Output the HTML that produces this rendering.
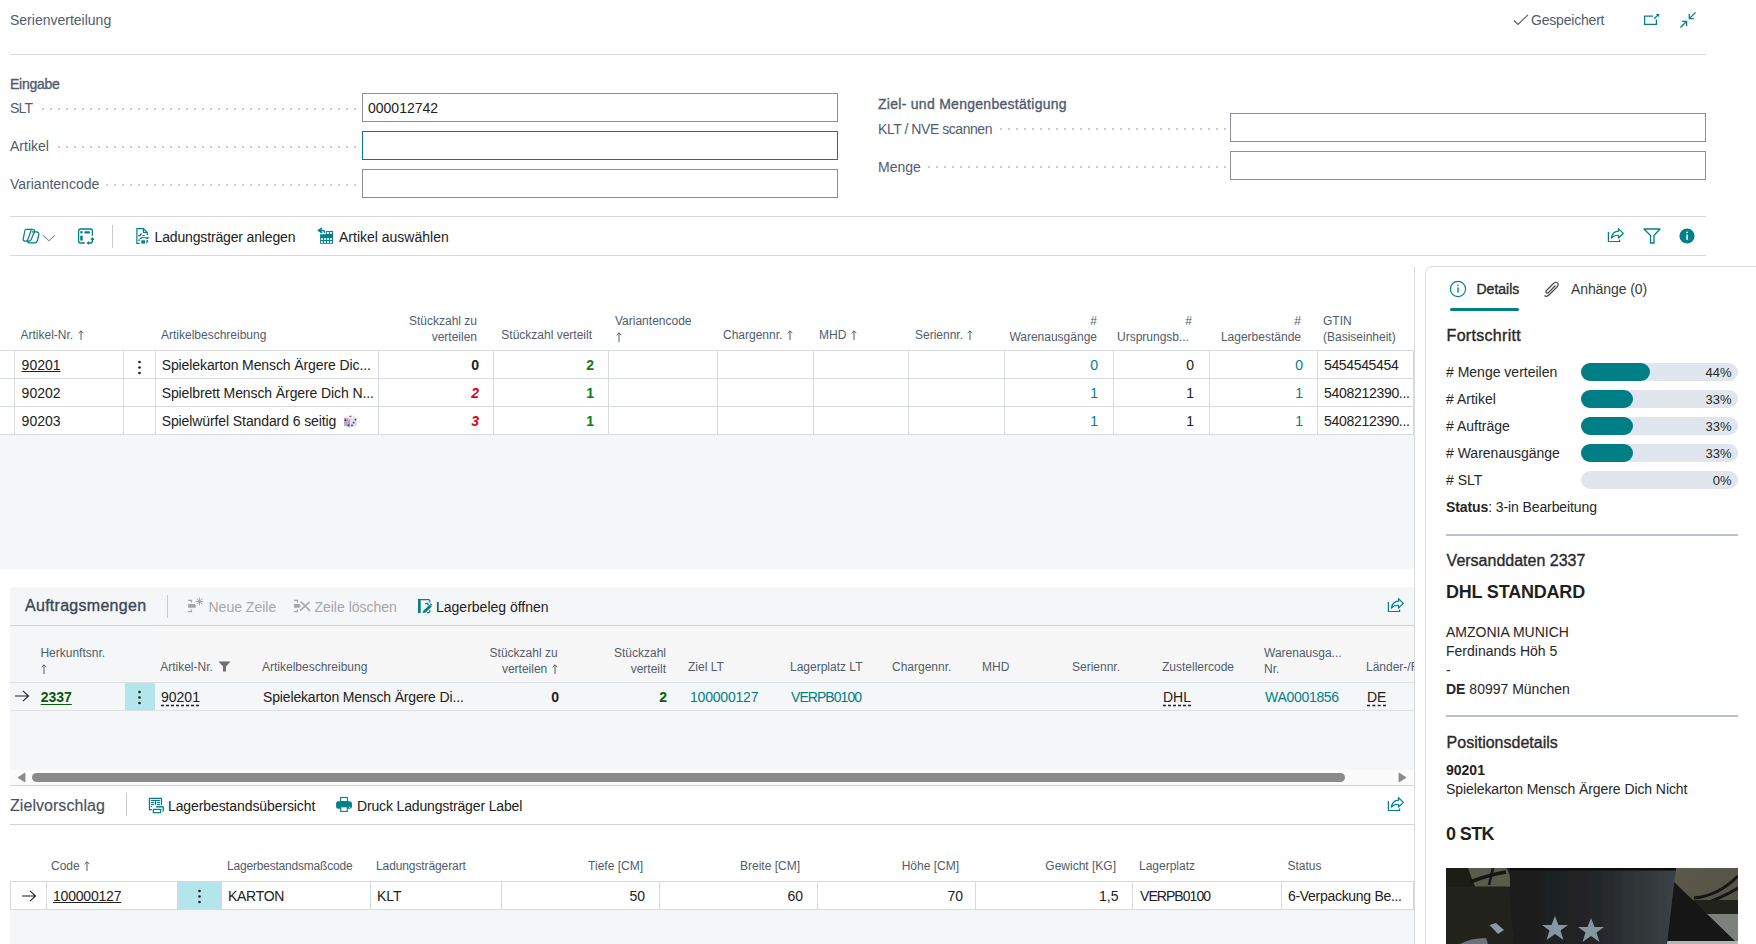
<!DOCTYPE html>
<html><head><meta charset="utf-8"><title>Serienverteilung</title>
<style>
html,body{margin:0;padding:0;background:#fff;}
body{width:1756px;height:944px;position:relative;overflow:hidden;font-family:"Liberation Sans",sans-serif;}
.t{position:absolute;white-space:nowrap;}
.r{position:absolute;}
</style></head><body>
<div class="t" style="left:10px;top:13.15px;font-size:14px;line-height:14px;font-weight:400;color:#505c6d;">Serienverteilung</div>
<svg class="r" style="left:1513px;top:14px;" width="16" height="12" viewBox="0 0 16 12"><path d="M1 6.5 L5 10.5 L15 0.8" fill="none" stroke="#505c6d" stroke-width="1.1"/></svg>
<div class="t" style="left:1531px;top:13.15px;font-size:14px;line-height:14px;font-weight:400;color:#505c6d;letter-spacing:-0.2px">Gespeichert</div>
<svg class="r" style="left:1640px;top:8px" width="60" height="24" viewBox="1640 8 60 24"><g fill="none" stroke="#008088" stroke-width="1.3">
<path d="M1653 16.2 H1644.6 V24.3 H1656.4 V19.6"/><path d="M1654.2 18.7 L1658.3 14.6"/>
<path d="M1695.6 12.4 L1689.8 18.1"/><path d="M1689.3 14 V18.6 H1693.9"/>
<path d="M1680.4 27.5 L1686.2 21.8"/><path d="M1682 21.4 H1686.6 V26"/></g>
<path d="M1655.8 13.9 H1659.2 V17.3Z" fill="#008088"/></svg>
<div class="r" style="left:10px;top:54px;width:1696px;height:1px;background:#d6d9de;"></div>
<div class="t" style="left:10px;top:77.15px;font-size:14px;line-height:14px;font-weight:400;color:#505c6d;-webkit-text-stroke:0.35px currentColor;letter-spacing:-0.25px">Eingabe</div>
<div class="r" style="left:34px;top:108px;width:324px;height:2px;background-image:radial-gradient(circle at 1px 1px,#c9cdd3 0.9px,transparent 1.1px);background-size:8px 2px;"></div>
<div class="t" style="left:10px;top:101.15px;font-size:14px;line-height:14px;font-weight:400;color:#505c6d;letter-spacing:-0.8px;background:#fff;padding-right:5px">SLT</div>
<div class="r" style="left:362px;top:93px;width:476px;height:29px;box-sizing:border-box;border:1px solid #8a919e;background:#fff;"></div>
<div class="t" style="left:368px;top:100.85px;font-size:14px;line-height:14px;font-weight:400;color:#212121;">000012742</div>
<div class="r" style="left:10px;top:146px;width:348px;height:2px;background-image:radial-gradient(circle at 1px 1px,#c9cdd3 0.9px,transparent 1.1px);background-size:8px 2px;"></div>
<div class="t" style="left:10px;top:139.15px;font-size:14px;line-height:14px;font-weight:400;color:#505c6d;background:#fff;padding-right:5px">Artikel</div>
<div class="r" style="left:362px;top:131px;width:476px;height:29px;box-sizing:border-box;border:1px solid #008088;background:#fff;"></div>
<div class="r" style="left:10px;top:184px;width:348px;height:2px;background-image:radial-gradient(circle at 1px 1px,#c9cdd3 0.9px,transparent 1.1px);background-size:8px 2px;"></div>
<div class="t" style="left:10px;top:176.85px;font-size:14px;line-height:14px;font-weight:400;color:#505c6d;background:#fff;padding-right:5px">Variantencode</div>
<div class="r" style="left:362px;top:169px;width:476px;height:29px;box-sizing:border-box;border:1px solid #8a919e;background:#fff;"></div>
<div class="t" style="left:878px;top:97.15px;font-size:14px;line-height:14px;font-weight:400;color:#505c6d;-webkit-text-stroke:0.35px currentColor;letter-spacing:0.28px">Ziel- und Mengenbestätigung</div>
<div class="r" style="left:880px;top:128px;width:346px;height:2px;background-image:radial-gradient(circle at 1px 1px,#c9cdd3 0.9px,transparent 1.1px);background-size:8px 2px;"></div>
<div class="t" style="left:878px;top:121.75px;font-size:14px;line-height:14px;font-weight:400;color:#505c6d;letter-spacing:-0.45px;background:#fff;padding-right:5px">KLT / NVE scannen</div>
<div class="r" style="left:1230px;top:113px;width:476px;height:29px;box-sizing:border-box;border:1px solid #8a919e;background:#fff;"></div>
<div class="r" style="left:880px;top:166px;width:346px;height:2px;background-image:radial-gradient(circle at 1px 1px,#c9cdd3 0.9px,transparent 1.1px);background-size:8px 2px;"></div>
<div class="t" style="left:878px;top:159.75px;font-size:14px;line-height:14px;font-weight:400;color:#505c6d;background:#fff;padding-right:5px">Menge</div>
<div class="r" style="left:1230px;top:151px;width:476px;height:29px;box-sizing:border-box;border:1px solid #8a919e;background:#fff;"></div>
<div class="r" style="left:10px;top:216px;width:1696px;height:1px;background:#d6d9de;"></div>
<svg class="r" style="left:18px;top:222px" width="42" height="28" viewBox="18 222 42 28"><g fill="none" stroke="#008088" stroke-width="1.25" stroke-linejoin="round">
<path d="M25.8 229.3 H32.2 Q35 229.3 34.6 231.6 L31.2 239.4 Q30.5 241 28.8 241 H25 Q22.6 241 23.3 238.6 L24.6 232 Q25 229.3 25.8 229.3Z"/>
<path d="M32 231.8 H36.2 Q39.2 232 38.8 235 L37.4 240.4 Q36.8 242.8 34.5 242.8 H29.6 Q27.2 242.8 27.6 240.6"/>
<path d="M31.2 230.2 L27 241.6"/></g>
<path d="M43 235.3 L48.9 240.8 L54.8 235.3" fill="none" stroke="#8a8a8a" stroke-width="1.1"/></svg>
<svg class="r" style="left:74px;top:224px" width="24" height="24" viewBox="74 224 24 24"><g fill="none" stroke="#008088" stroke-width="1.3">
<path d="M84.8 243 H80.6 Q78.6 243 78.6 241 V231 Q78.6 229 80.6 229 H90.4 Q92.4 229 92.4 231 V235.8"/>
<path d="M92.4 238.3 V241 Q92.4 243 90.4 243 H87.6"/></g>
<path d="M91 239.8 L92.4 238 L93.8 239.8 M89 241.6 L87.4 243 L89 244.4" fill="none" stroke="#008088" stroke-width="1.2"/>
<rect x="80.2" y="231.1" width="2.5" height="2.5" rx="1" fill="#008088"/>
<rect x="84.3" y="231.3" width="5.7" height="2.1" rx="1" fill="#008088"/>
<rect x="80.2" y="235.4" width="2.5" height="5.3" rx="1" fill="#008088"/></svg>
<div class="r" style="left:112px;top:225px;width:1px;height:23px;background:#c8ccd2;"></div>
<svg class="r" style="left:130px;top:224px" width="30" height="24" viewBox="130 224 30 24"><g fill="none" stroke="#008088" stroke-width="1.2">
<path d="M139.7 243.4 H136.9 V228.7 H143.5 L147.3 232.5 V235.3"/><path d="M143.4 228.9 V232.4 H147.2"/>
<path d="M138.3 235.9 L140 235.3 L141.5 233.5" stroke-width="1.4"/><path d="M142.4 235.6 H144.6"/></g>
<path d="M139.2 238.9 L140.8 237.3 H149.6 L148 238.9 H146.4 L146.1 238.2 H141.7 L141.4 238.9Z" fill="#008088"/>
<rect x="141.3" y="240.3" width="3.8" height="3.3" fill="#008088"/>
<path d="M146.3 240.3 H148.1 V241.5 L146.8 243.6 H146.3Z" fill="#008088"/>
<rect x="138.2" y="239.5" width="1.8" height="1.3" fill="#008088"/></svg>
<div class="t" style="left:154.5px;top:230.15px;font-size:14px;line-height:14px;font-weight:400;color:#212121;letter-spacing:-0.15px">Ladungsträger anlegen</div>
<svg class="r" style="left:312px;top:224px" width="30" height="24" viewBox="312 224 30 24"><path d="M320.1 234.2 H326.1 V231 H333 V243.8 H320.1Z" fill="#008088"/><rect x="320.95" y="238.05" width="1.9" height="1.9" fill="#fff"/><rect x="320.95" y="241.05" width="1.9" height="1.9" fill="#fff"/><rect x="324.05" y="238.05" width="1.9" height="1.9" fill="#fff"/><rect x="324.05" y="241.05" width="1.9" height="1.9" fill="#fff"/><rect x="326.95" y="238.05" width="1.9" height="1.9" fill="#fff"/><rect x="326.95" y="241.05" width="1.9" height="1.9" fill="#fff"/><rect x="329.95" y="238.05" width="1.9" height="1.9" fill="#fff"/><rect x="329.95" y="241.05" width="1.9" height="1.9" fill="#fff"/><rect x="326.95" y="231.95" width="1.9" height="1.9" fill="#fff"/><rect x="329.95" y="231.95" width="1.9" height="1.9" fill="#fff"/>
<path d="M324.5 232.6 V231.6 Q324.5 230.4 323 230.4 H318.6 M321.6 228.4 L318.4 230.4 L321.6 232.5" fill="none" stroke="#008088" stroke-width="1.5" stroke-linejoin="round" stroke-linecap="round"/></svg>
<div class="t" style="left:339px;top:230.15px;font-size:14px;line-height:14px;font-weight:400;color:#212121;">Artikel auswählen</div>
<svg class="r" style="left:1607px;top:227px;" width="18" height="16" viewBox="0 0 18 16"><g fill="none" stroke="#008088" stroke-width="1.2" stroke-linejoin="round"><path d="M1.4 5.1 V14.5 H12.6 V12.5"/><path d="M4.4 11 Q5.5 4.5 11.5 4.2 V1.6 L16.3 6.4 L11.5 11 V8.3 Q7 8 4.4 11Z"/></g></svg>
<svg class="r" style="left:1643px;top:228px;" width="18" height="16" viewBox="0 0 18 16"><path d="M1 1 H17 L11 7.5 V15 H7.5 V7.5 Z" fill="none" stroke="#008088" stroke-width="1.3" stroke-linejoin="round"/></svg>
<svg class="r" style="left:1679px;top:228px;" width="16" height="16" viewBox="0 0 16 16"><circle cx="8" cy="8" r="7.6" fill="#008088"/><rect x="7.3" y="6.5" width="1.5" height="5.3" fill="#fff"/><circle cx="8.05" cy="4.3" r="0.9" fill="#fff"/></svg>
<div class="r" style="left:10px;top:255px;width:1696px;height:1px;background:#d6d9de;"></div>
<div class="r" style="left:0px;top:435px;width:1414px;height:134px;background:#f5f6f8;"></div>
<div class="r" style="left:0px;top:350px;width:1414px;height:1px;background:#d6d9de;"></div>
<div class="r" style="left:0px;top:378px;width:1414px;height:1px;background:#d6d9de;"></div>
<div class="r" style="left:0px;top:406px;width:1414px;height:1px;background:#d6d9de;"></div>
<div class="r" style="left:0px;top:434px;width:1414px;height:1px;background:#d6d9de;"></div>
<div class="r" style="left:14px;top:350px;width:1px;height:84px;background:#d6d9de;"></div>
<div class="r" style="left:123px;top:350px;width:1px;height:84px;background:#d6d9de;"></div>
<div class="r" style="left:155px;top:350px;width:1px;height:84px;background:#d6d9de;"></div>
<div class="r" style="left:378px;top:350px;width:1px;height:84px;background:#d6d9de;"></div>
<div class="r" style="left:493px;top:350px;width:1px;height:84px;background:#d6d9de;"></div>
<div class="r" style="left:608px;top:350px;width:1px;height:84px;background:#d6d9de;"></div>
<div class="r" style="left:717px;top:350px;width:1px;height:84px;background:#d6d9de;"></div>
<div class="r" style="left:813px;top:350px;width:1px;height:84px;background:#d6d9de;"></div>
<div class="r" style="left:908px;top:350px;width:1px;height:84px;background:#d6d9de;"></div>
<div class="r" style="left:1004px;top:350px;width:1px;height:84px;background:#d6d9de;"></div>
<div class="r" style="left:1113px;top:350px;width:1px;height:84px;background:#d6d9de;"></div>
<div class="r" style="left:1209px;top:350px;width:1px;height:84px;background:#d6d9de;"></div>
<div class="r" style="left:1317px;top:350px;width:1px;height:84px;background:#d6d9de;"></div>
<div class="r" style="left:1413px;top:350px;width:1px;height:84px;background:#d6d9de;"></div>
<div class="t" style="left:20.5px;top:328.84px;font-size:12px;line-height:12px;font-weight:400;color:#505c6d;">Artikel-Nr. <svg width="6" height="10" style="vertical-align:-1px;margin-left:1px" viewBox="0 0 6 10"><path d="M3 0.8 V10 M0.6 3.2 L3 0.8 L5.4 3.2" fill="none" stroke="#505c6d" stroke-width="1"/></svg></div>
<div class="t" style="left:161px;top:328.84px;font-size:12px;line-height:12px;font-weight:400;color:#505c6d;">Artikelbeschreibung</div>
<div class="t" style="right:1279px;text-align:right;top:314.84px;font-size:12px;line-height:12px;font-weight:400;color:#505c6d;">Stückzahl zu</div>
<div class="t" style="right:1279px;text-align:right;top:330.84px;font-size:12px;line-height:12px;font-weight:400;color:#505c6d;">verteilen</div>
<div class="t" style="right:1164px;text-align:right;top:328.84px;font-size:12px;line-height:12px;font-weight:400;color:#505c6d;">Stückzahl verteilt</div>
<div class="t" style="left:615px;top:314.84px;font-size:12px;line-height:12px;font-weight:400;color:#505c6d;">Variantencode</div>
<div class="t" style="left:615px;top:330.84px;font-size:12px;line-height:12px;font-weight:400;color:#505c6d;"><svg width="6" height="10" style="vertical-align:-1px;margin-left:1px" viewBox="0 0 6 10"><path d="M3 0.8 V10 M0.6 3.2 L3 0.8 L5.4 3.2" fill="none" stroke="#505c6d" stroke-width="1"/></svg></div>
<div class="t" style="left:723px;top:328.84px;font-size:12px;line-height:12px;font-weight:400;color:#505c6d;">Chargennr. <svg width="6" height="10" style="vertical-align:-1px;margin-left:1px" viewBox="0 0 6 10"><path d="M3 0.8 V10 M0.6 3.2 L3 0.8 L5.4 3.2" fill="none" stroke="#505c6d" stroke-width="1"/></svg></div>
<div class="t" style="left:819px;top:328.84px;font-size:12px;line-height:12px;font-weight:400;color:#505c6d;">MHD <svg width="6" height="10" style="vertical-align:-1px;margin-left:1px" viewBox="0 0 6 10"><path d="M3 0.8 V10 M0.6 3.2 L3 0.8 L5.4 3.2" fill="none" stroke="#505c6d" stroke-width="1"/></svg></div>
<div class="t" style="left:915px;top:328.84px;font-size:12px;line-height:12px;font-weight:400;color:#505c6d;">Seriennr. <svg width="6" height="10" style="vertical-align:-1px;margin-left:1px" viewBox="0 0 6 10"><path d="M3 0.8 V10 M0.6 3.2 L3 0.8 L5.4 3.2" fill="none" stroke="#505c6d" stroke-width="1"/></svg></div>
<div class="t" style="right:659px;text-align:right;top:314.84px;font-size:12px;line-height:12px;font-weight:400;color:#505c6d;">#</div>
<div class="t" style="right:659px;text-align:right;top:330.84px;font-size:12px;line-height:12px;font-weight:400;color:#505c6d;">Warenausgänge</div>
<div class="t" style="right:564px;text-align:right;top:314.84px;font-size:12px;line-height:12px;font-weight:400;color:#505c6d;">#</div>
<div class="t" style="right:567px;text-align:right;top:330.84px;font-size:12px;line-height:12px;font-weight:400;color:#505c6d;">Ursprungsb...</div>
<div class="t" style="right:455px;text-align:right;top:314.84px;font-size:12px;line-height:12px;font-weight:400;color:#505c6d;">#</div>
<div class="t" style="right:455px;text-align:right;top:330.84px;font-size:12px;line-height:12px;font-weight:400;color:#505c6d;">Lagerbestände</div>
<div class="t" style="left:1323px;top:314.84px;font-size:12px;line-height:12px;font-weight:400;color:#505c6d;">GTIN</div>
<div class="t" style="left:1323px;top:330.84px;font-size:12px;line-height:12px;font-weight:400;color:#505c6d;">(Basiseinheit)</div>
<div class="t" style="left:21.6px;top:358.15px;font-size:14px;line-height:14px;font-weight:400;color:#212121;text-decoration:underline;text-underline-offset:1px">90201</div>
<div class="t" style="left:21.6px;top:386.15px;font-size:14px;line-height:14px;font-weight:400;color:#212121;">90202</div>
<div class="t" style="left:21.6px;top:414.15px;font-size:14px;line-height:14px;font-weight:400;color:#212121;">90203</div>
<svg class="r" style="left:137px;top:360px;" width="5" height="15" viewBox="0 0 5 15"><circle cx="2.5" cy="2" r="1.3" fill="#212121"/><circle cx="2.5" cy="7.5" r="1.3" fill="#212121"/><circle cx="2.5" cy="13" r="1.3" fill="#212121"/></svg>
<div class="t" style="left:161.7px;top:358.15px;font-size:14px;line-height:14px;font-weight:400;color:#212121;letter-spacing:-0.1px">Spielekarton Mensch Ärgere Dic...</div>
<div class="t" style="left:161.7px;top:386.15px;font-size:14px;line-height:14px;font-weight:400;color:#212121;letter-spacing:-0.1px">Spielbrett Mensch Ärgere Dich N...</div>
<div class="t" style="left:161.7px;top:414.15px;font-size:14px;line-height:14px;font-weight:400;color:#212121;letter-spacing:-0.1px">Spielwürfel Standard 6 seitig</div>
<svg class="r" style="left:340px;top:410px" width="22" height="22" viewBox="340 410 22 22"><path d="M344 417.5 L350.5 414.3 L357 417.5 L350.5 419.2Z" fill="#ededf0"/><path d="M344 417.5 L350.5 419.2 V427.8 L344 425.8Z" fill="#b5abc6"/><path d="M350.5 419.2 L357 417.5 V425.8 L350.5 427.8Z" fill="#e3dcec"/><ellipse cx="350.4" cy="416.5" rx="1.3" ry="0.8" fill="#e8506e"/><circle cx="345.4" cy="420.2" r="0.9" fill="#3b2a78"/><circle cx="348.6" cy="425.1" r="0.9" fill="#3b2a78"/><circle cx="355.4" cy="419.6" r="0.9" fill="#3b2a78"/><circle cx="353.7" cy="422.6" r="0.9" fill="#3b2a78"/><circle cx="352" cy="425.3" r="0.9" fill="#3b2a78"/></svg>
<div class="t" style="right:1277px;text-align:right;top:358.15px;font-size:14px;line-height:14px;font-weight:700;color:#212121;">0</div>
<div class="t" style="right:1277px;text-align:right;top:386.15px;font-size:14px;line-height:14px;font-weight:700;color:#e3001b;font-style:italic">2</div>
<div class="t" style="right:1277px;text-align:right;top:414.15px;font-size:14px;line-height:14px;font-weight:700;color:#e3001b;font-style:italic">3</div>
<div class="t" style="right:1162px;text-align:right;top:358.15px;font-size:14px;line-height:14px;font-weight:700;color:#107c10;">2</div>
<div class="t" style="right:1162px;text-align:right;top:386.15px;font-size:14px;line-height:14px;font-weight:700;color:#107c10;">1</div>
<div class="t" style="right:1162px;text-align:right;top:414.15px;font-size:14px;line-height:14px;font-weight:700;color:#107c10;">1</div>
<div class="t" style="right:658px;text-align:right;top:358.15px;font-size:14px;line-height:14px;font-weight:400;color:#008088;">0</div>
<div class="t" style="right:562px;text-align:right;top:358.15px;font-size:14px;line-height:14px;font-weight:400;color:#212121;">0</div>
<div class="t" style="right:453px;text-align:right;top:358.15px;font-size:14px;line-height:14px;font-weight:400;color:#008088;">0</div>
<div class="t" style="right:658px;text-align:right;top:386.15px;font-size:14px;line-height:14px;font-weight:400;color:#008088;">1</div>
<div class="t" style="right:562px;text-align:right;top:386.15px;font-size:14px;line-height:14px;font-weight:400;color:#212121;">1</div>
<div class="t" style="right:453px;text-align:right;top:386.15px;font-size:14px;line-height:14px;font-weight:400;color:#008088;">1</div>
<div class="t" style="right:658px;text-align:right;top:414.15px;font-size:14px;line-height:14px;font-weight:400;color:#008088;">1</div>
<div class="t" style="right:562px;text-align:right;top:414.15px;font-size:14px;line-height:14px;font-weight:400;color:#212121;">1</div>
<div class="t" style="right:453px;text-align:right;top:414.15px;font-size:14px;line-height:14px;font-weight:400;color:#008088;">1</div>
<div class="t" style="left:1324px;top:358.15px;font-size:14px;line-height:14px;font-weight:400;color:#212121;letter-spacing:-0.35px">5454545454</div>
<div class="t" style="left:1324px;top:386.15px;font-size:14px;line-height:14px;font-weight:400;color:#212121;letter-spacing:-0.3px">5408212390...</div>
<div class="t" style="left:1324px;top:414.15px;font-size:14px;line-height:14px;font-weight:400;color:#212121;letter-spacing:-0.3px">5408212390...</div>
<div class="r" style="left:1414px;top:267px;width:1px;height:677px;background:#d6d9de;"></div>
<div class="r" style="left:10px;top:587px;width:1404px;height:183px;background:#f5f6f8;"></div>
<div class="t" style="left:25px;top:598.46px;font-size:16px;line-height:16px;font-weight:400;color:#3c4858;-webkit-text-stroke:0.35px currentColor;letter-spacing:0.28px">Auftragsmengen</div>
<div class="r" style="left:167px;top:595px;width:1px;height:23px;background:#c8ccd2;"></div>
<svg class="r" style="left:182px;top:592px" width="40" height="26" viewBox="182 592 40 26"><g fill="none" stroke="#a6a6a6" stroke-width="1.2">
<path d="M188.1 600.4 H191.5 V602.5 M188.1 611.6 H191.5 V609.4"/>
<path d="M199.4 597.6 V605.4 M195.5 601.5 H203.3 M196.6 598.7 L202.2 604.3 M202.2 598.7 L196.6 604.3" stroke-width="1"/></g>
<path d="M188.1 604.1 H194.6 L195.8 605.3 V607.7 H188.1Z" fill="#a6a6a6"/></svg>
<div class="t" style="left:208.5px;top:600.15px;font-size:14px;line-height:14px;font-weight:400;color:#a6a6a6;">Neue Zeile</div>
<svg class="r" style="left:288px;top:592px" width="40" height="26" viewBox="288 592 40 26"><g fill="none" stroke="#a6a6a6" stroke-width="1.2">
<path d="M294.1 600.4 H297.5 V602.5 M294.1 611.6 H297.5 V609.4"/>
<path d="M301.2 602 L309.6 610.5 M300.6 610.2 L308.9 602.5" stroke-width="1.7" stroke-linecap="round"/></g>
<path d="M294.1 604.1 H299.3 L300.9 605.9 L299.3 607.7 H294.1Z" fill="#a6a6a6"/></svg>
<div class="t" style="left:314.4px;top:600.15px;font-size:14px;line-height:14px;font-weight:400;color:#a6a6a6;">Zeile löschen</div>
<svg class="r" style="left:410px;top:592px" width="30" height="26" viewBox="410 592 30 26"><rect x="418" y="599" width="2.7" height="14" fill="#008088"/>
<path d="M419 599.6 H428.6 Q429.8 599.6 429.8 600.8 V602.6 M429.8 609.8 V611.5 Q429.8 612.7 428.6 612.7 H427" fill="none" stroke="#008088" stroke-width="1.2"/>
<path d="M422.4 613.3 L423.6 610.6 L429.8 604.4 L431.8 606.4 L425.6 612.6Z" fill="#008088"/>
<path d="M425.2 603.6 L427.6 603.4 L428.2 605.2 M430.4 603.8 L431.8 605" fill="none" stroke="#008088" stroke-width="1.3"/></svg>
<div class="t" style="left:436px;top:600.15px;font-size:14px;line-height:14px;font-weight:400;color:#212121;">Lagerbeleg öffnen</div>
<svg class="r" style="left:1387px;top:597px;" width="18" height="16" viewBox="0 0 18 16"><g fill="none" stroke="#008088" stroke-width="1.2" stroke-linejoin="round"><path d="M1.4 5.1 V14.5 H12.6 V12.5"/><path d="M4.4 11 Q5.5 4.5 11.5 4.2 V1.6 L16.3 6.4 L11.5 11 V8.3 Q7 8 4.4 11Z"/></g></svg>
<div class="r" style="left:10px;top:625px;width:1404px;height:1px;background:#d0d4da;"></div>
<div class="t" style="left:40.4px;top:646.84px;font-size:12px;line-height:12px;font-weight:400;color:#505c6d;">Herkunftsnr.</div>
<div class="t" style="left:40.4px;top:662.84px;font-size:12px;line-height:12px;font-weight:400;color:#505c6d;"><svg width="6" height="10" style="vertical-align:-1px;margin-left:1px" viewBox="0 0 6 10"><path d="M3 0.8 V10 M0.6 3.2 L3 0.8 L5.4 3.2" fill="none" stroke="#505c6d" stroke-width="1"/></svg></div>
<div class="r" style="left:153px;top:626px;width:1261px;height:56px;background:#f7f7f8;"></div>
<div class="t" style="left:160.2px;top:660.84px;font-size:12px;line-height:12px;font-weight:400;color:#505c6d;">Artikel-Nr.</div>
<svg class="r" style="left:218px;top:661px;" width="13" height="11" viewBox="0 0 13 11"><path d="M0.5 0.5 H12.5 L8 5.5 V10.5 H5 V5.5Z" fill="#6f6f6f"/></svg>
<div class="t" style="left:262px;top:660.84px;font-size:12px;line-height:12px;font-weight:400;color:#505c6d;">Artikelbeschreibung</div>
<div class="t" style="right:1198.4px;text-align:right;top:646.84px;font-size:12px;line-height:12px;font-weight:400;color:#505c6d;">Stückzahl zu</div>
<div class="t" style="right:1198.4px;text-align:right;top:662.84px;font-size:12px;line-height:12px;font-weight:400;color:#505c6d;">verteilen <svg width="6" height="10" style="vertical-align:-1px;margin-left:1px" viewBox="0 0 6 10"><path d="M3 0.8 V10 M0.6 3.2 L3 0.8 L5.4 3.2" fill="none" stroke="#505c6d" stroke-width="1"/></svg></div>
<div class="t" style="right:1090px;text-align:right;top:646.84px;font-size:12px;line-height:12px;font-weight:400;color:#505c6d;">Stückzahl</div>
<div class="t" style="right:1090px;text-align:right;top:662.84px;font-size:12px;line-height:12px;font-weight:400;color:#505c6d;">verteilt</div>
<div class="t" style="left:688px;top:660.84px;font-size:12px;line-height:12px;font-weight:400;color:#505c6d;">Ziel LT</div>
<div class="t" style="left:790px;top:660.84px;font-size:12px;line-height:12px;font-weight:400;color:#505c6d;">Lagerplatz LT</div>
<div class="t" style="left:892px;top:660.84px;font-size:12px;line-height:12px;font-weight:400;color:#505c6d;">Chargennr.</div>
<div class="t" style="left:982px;top:660.84px;font-size:12px;line-height:12px;font-weight:400;color:#505c6d;">MHD</div>
<div class="t" style="left:1072px;top:660.84px;font-size:12px;line-height:12px;font-weight:400;color:#505c6d;">Seriennr.</div>
<div class="t" style="left:1162px;top:660.84px;font-size:12px;line-height:12px;font-weight:400;color:#505c6d;">Zustellercode</div>
<div class="t" style="left:1264px;top:646.84px;font-size:12px;line-height:12px;font-weight:400;color:#505c6d;">Warenausga...</div>
<div class="t" style="left:1264px;top:662.84px;font-size:12px;line-height:12px;font-weight:400;color:#505c6d;">Nr.</div>
<div class="r" style="left:1366px;top:600px;width:48px;height:90px;overflow:hidden">
<div class="t" style="left:0px;top:60.84px;font-size:12px;line-height:12px;font-weight:400;color:#505c6d;">Länder-/Regionscode</div>
</div>
<div class="r" style="left:10px;top:682px;width:1404px;height:1px;background:#dcdfe3;"></div>
<div class="r" style="left:10px;top:710px;width:1404px;height:1px;background:#dcdfe3;"></div>
<svg class="r" style="left:14px;top:690px;" width="16" height="12" viewBox="0 0 16 12"><path d="M1 6 H14.5 M9 0.8 L14.5 6 L9 11.2" fill="none" stroke="#212121" stroke-width="1.1"/></svg>
<div class="t" style="left:40.7px;top:690.15px;font-size:14px;line-height:14px;font-weight:700;color:#0b5a0b;text-decoration:underline;text-underline-offset:2px">2337</div>
<div class="r" style="left:125px;top:683px;width:30px;height:27px;background:#b3e5ea;"></div>
<svg class="r" style="left:137px;top:690px;" width="5" height="15" viewBox="0 0 5 15"><circle cx="2.5" cy="2" r="1.3" fill="#212121"/><circle cx="2.5" cy="7.5" r="1.3" fill="#212121"/><circle cx="2.5" cy="13" r="1.3" fill="#212121"/></svg>
<div class="t" style="left:161px;top:690.15px;font-size:14px;line-height:14px;font-weight:400;color:#212121;text-decoration:underline dashed;text-underline-offset:3px">90201</div>
<div class="t" style="left:263px;top:690.15px;font-size:14px;line-height:14px;font-weight:400;color:#212121;letter-spacing:-0.15px">Spielekarton Mensch Ärgere Di...</div>
<div class="t" style="right:1197px;text-align:right;top:690.15px;font-size:14px;line-height:14px;font-weight:700;color:#212121;">0</div>
<div class="t" style="right:1089px;text-align:right;top:690.15px;font-size:14px;line-height:14px;font-weight:700;color:#0b5a0b;">2</div>
<div class="t" style="left:690px;top:690.15px;font-size:14px;line-height:14px;font-weight:400;color:#008088;letter-spacing:-0.2px">100000127</div>
<div class="t" style="left:791px;top:690.15px;font-size:14px;line-height:14px;font-weight:400;color:#008088;letter-spacing:-0.95px">VERPB0100</div>
<div class="t" style="left:1163px;top:690.15px;font-size:14px;line-height:14px;font-weight:400;color:#212121;text-decoration:underline dashed;text-underline-offset:3px">DHL</div>
<div class="t" style="left:1265px;top:690.15px;font-size:14px;line-height:14px;font-weight:400;color:#008088;letter-spacing:-0.3px">WA0001856</div>
<div class="t" style="left:1367px;top:690.15px;font-size:14px;line-height:14px;font-weight:400;color:#212121;text-decoration:underline dashed;text-underline-offset:3px">DE</div>
<div class="r" style="left:10px;top:770px;width:1404px;height:15px;background:#fbfbfb;"></div>
<svg class="r" style="left:16px;top:772px;" width="10" height="11" viewBox="0 0 10 11"><path d="M9 1 V10 L2 5.5Z" fill="#8a8a8a" stroke="#8a8a8a" stroke-width="0.8" stroke-linejoin="round"/></svg>
<div class="r" style="left:32px;top:773px;width:1313px;height:9px;background:#8a8a8a;border-radius:5px"></div>
<svg class="r" style="left:1398px;top:772px;" width="10" height="11" viewBox="0 0 10 11"><path d="M1 1 V10 L8 5.5Z" fill="#8a8a8a" stroke="#8a8a8a" stroke-width="0.8" stroke-linejoin="round"/></svg>
<div class="r" style="left:10px;top:785px;width:1404px;height:1px;background:#d0d4da;"></div>
<div class="t" style="left:10px;top:798.46px;font-size:16px;line-height:16px;font-weight:400;color:#46525f;-webkit-text-stroke:0.15px currentColor;letter-spacing:0.05px">Zielvorschlag</div>
<div class="r" style="left:126px;top:793px;width:1px;height:23px;background:#c8ccd2;"></div>
<svg class="r" style="left:144px;top:792px" width="26" height="24" viewBox="144 792 26 24"><g fill="none" stroke="#008088" stroke-width="1.2" stroke-linecap="round">
<path d="M151.5 809.6 H149.4 V798.4 H161.5 V804.5"/>
<path d="M151.3 800.5 H159.7 M155.4 800.5 V804.6 M151.3 802.5 H153.5 M151.3 804.5 H153.5 M157.4 802.5 H159.6 M157.4 804.5 H159.6"/>
<rect x="153.3" y="809.4" width="7.4" height="3.3" stroke-linecap="butt"/></g>
<circle cx="151.4" cy="806.5" r="0.7" fill="#008088"/>
<path d="M156.1 806.1 H162.6 Q164 806.3 164 807.6 V810.5 L162.6 812.4 V807.6 H156.1Z" fill="#008088"/></svg>
<div class="t" style="left:168px;top:799.15px;font-size:14px;line-height:14px;font-weight:400;color:#212121;letter-spacing:-0.1px">Lagerbestandsübersicht</div>
<svg class="r" style="left:330px;top:792px" width="28" height="24" viewBox="330 792 28 24"><path d="M338.4 801.2 H349.6 Q351.9 801.2 351.9 803.5 V806.6 Q351.9 808.8 349.6 808.8 H338.4 Q336.1 808.8 336.1 806.6 V803.5 Q336.1 801.2 338.4 801.2Z" fill="#008088"/>
<rect x="340.6" y="797.5" width="6.8" height="4" fill="none" stroke="#008088" stroke-width="1.1"/>
<rect x="340.7" y="806.8" width="6.6" height="4.6" fill="#fff" stroke="#008088" stroke-width="1.1"/>
<circle cx="349.5" cy="807.4" r="0.65" fill="#fff"/></svg>
<div class="t" style="left:357px;top:799.15px;font-size:14px;line-height:14px;font-weight:400;color:#212121;letter-spacing:-0.15px">Druck Ladungsträger Label</div>
<svg class="r" style="left:1387px;top:796px;" width="18" height="16" viewBox="0 0 18 16"><g fill="none" stroke="#008088" stroke-width="1.2" stroke-linejoin="round"><path d="M1.4 5.1 V14.5 H12.6 V12.5"/><path d="M4.4 11 Q5.5 4.5 11.5 4.2 V1.6 L16.3 6.4 L11.5 11 V8.3 Q7 8 4.4 11Z"/></g></svg>
<div class="r" style="left:10px;top:824px;width:1404px;height:1px;background:#d0d4da;"></div>
<div class="t" style="left:51px;top:859.84px;font-size:12px;line-height:12px;font-weight:400;color:#505c6d;">Code <svg width="6" height="10" style="vertical-align:-1px;margin-left:1px" viewBox="0 0 6 10"><path d="M3 0.8 V10 M0.6 3.2 L3 0.8 L5.4 3.2" fill="none" stroke="#505c6d" stroke-width="1"/></svg></div>
<div class="t" style="left:227px;top:859.84px;font-size:12px;line-height:12px;font-weight:400;color:#505c6d;letter-spacing:-0.2px">Lagerbestandsmaßcode</div>
<div class="t" style="left:376px;top:859.84px;font-size:12px;line-height:12px;font-weight:400;color:#505c6d;letter-spacing:-0.1px">Ladungsträgerart</div>
<div class="t" style="right:1113px;text-align:right;top:859.84px;font-size:12px;line-height:12px;font-weight:400;color:#505c6d;">Tiefe [CM]</div>
<div class="t" style="right:956px;text-align:right;top:859.84px;font-size:12px;line-height:12px;font-weight:400;color:#505c6d;">Breite [CM]</div>
<div class="t" style="right:797px;text-align:right;top:859.84px;font-size:12px;line-height:12px;font-weight:400;color:#505c6d;">Höhe [CM]</div>
<div class="t" style="right:640px;text-align:right;top:859.84px;font-size:12px;line-height:12px;font-weight:400;color:#505c6d;">Gewicht [KG]</div>
<div class="t" style="left:1139px;top:859.84px;font-size:12px;line-height:12px;font-weight:400;color:#505c6d;">Lagerplatz</div>
<div class="t" style="left:1287.5px;top:859.84px;font-size:12px;line-height:12px;font-weight:400;color:#505c6d;">Status</div>
<div class="r" style="left:10px;top:910px;width:1404px;height:34px;background:#f5f6f8;"></div>
<div class="r" style="left:10px;top:881px;width:1404px;height:1px;background:#d6d9de;"></div>
<div class="r" style="left:10px;top:909px;width:1404px;height:1px;background:#d6d9de;"></div>
<div class="r" style="left:10px;top:881px;width:1px;height:29px;background:#d6d9de;"></div>
<div class="r" style="left:46px;top:881px;width:1px;height:29px;background:#d6d9de;"></div>
<div class="r" style="left:177px;top:881px;width:1px;height:29px;background:#d6d9de;"></div>
<div class="r" style="left:221px;top:881px;width:1px;height:29px;background:#d6d9de;"></div>
<div class="r" style="left:370px;top:881px;width:1px;height:29px;background:#d6d9de;"></div>
<div class="r" style="left:501px;top:881px;width:1px;height:29px;background:#d6d9de;"></div>
<div class="r" style="left:659px;top:881px;width:1px;height:29px;background:#d6d9de;"></div>
<div class="r" style="left:817px;top:881px;width:1px;height:29px;background:#d6d9de;"></div>
<div class="r" style="left:975px;top:881px;width:1px;height:29px;background:#d6d9de;"></div>
<div class="r" style="left:1132px;top:881px;width:1px;height:29px;background:#d6d9de;"></div>
<div class="r" style="left:1281px;top:881px;width:1px;height:29px;background:#d6d9de;"></div>
<div class="r" style="left:1413px;top:881px;width:1px;height:29px;background:#d6d9de;"></div>
<div class="r" style="left:178px;top:882px;width:43px;height:27px;background:#b3e5ea;"></div>
<svg class="r" style="left:21px;top:890px;" width="16" height="12" viewBox="0 0 16 12"><path d="M1 6 H14.5 M9 0.8 L14.5 6 L9 11.2" fill="none" stroke="#212121" stroke-width="1.1"/></svg>
<div class="t" style="left:53px;top:889.15px;font-size:14px;line-height:14px;font-weight:400;color:#212121;text-decoration:underline;text-underline-offset:1px;letter-spacing:-0.2px">100000127</div>
<svg class="r" style="left:197px;top:889px;" width="5" height="15" viewBox="0 0 5 15"><circle cx="2.5" cy="2" r="1.3" fill="#212121"/><circle cx="2.5" cy="7.5" r="1.3" fill="#212121"/><circle cx="2.5" cy="13" r="1.3" fill="#212121"/></svg>
<div class="t" style="left:228px;top:889.15px;font-size:14px;line-height:14px;font-weight:400;color:#212121;letter-spacing:-0.3px">KARTON</div>
<div class="t" style="left:377px;top:889.15px;font-size:14px;line-height:14px;font-weight:400;color:#212121;">KLT</div>
<div class="t" style="right:1111px;text-align:right;top:889.15px;font-size:14px;line-height:14px;font-weight:400;color:#212121;">50</div>
<div class="t" style="right:953px;text-align:right;top:889.15px;font-size:14px;line-height:14px;font-weight:400;color:#212121;">60</div>
<div class="t" style="right:793px;text-align:right;top:889.15px;font-size:14px;line-height:14px;font-weight:400;color:#212121;">70</div>
<div class="t" style="right:637.5px;text-align:right;top:889.15px;font-size:14px;line-height:14px;font-weight:400;color:#212121;">1,5</div>
<div class="t" style="left:1140px;top:889.15px;font-size:14px;line-height:14px;font-weight:400;color:#212121;letter-spacing:-0.95px">VERPB0100</div>
<div class="t" style="left:1288px;top:889.15px;font-size:14px;line-height:14px;font-weight:400;color:#212121;letter-spacing:-0.3px">6-Verpackung Be...</div>
<div class="r" style="left:1425px;top:266px;width:340px;height:700px;box-sizing:border-box;border:1px solid #d6d9de;border-radius:7px 0 0 0;background:#fff"></div>
<svg class="r" style="left:1449px;top:280px;" width="18" height="18" viewBox="0 0 18 18"><circle cx="9" cy="9" r="7.6" fill="none" stroke="#008088" stroke-width="1.2"/><rect x="8.3" y="7.4" width="1.4" height="5.2" fill="#008088"/><circle cx="9" cy="5.3" r="0.85" fill="#008088"/></svg>
<div class="t" style="left:1476.5px;top:282.15px;font-size:14px;line-height:14px;font-weight:400;color:#2b2b2b;-webkit-text-stroke:0.35px currentColor;">Details</div>
<div class="r" style="left:1450px;top:308px;width:69px;height:3px;background:#008088;border-radius:2px"></div>
<svg class="r" style="left:1543px;top:281px;" width="17" height="16" viewBox="0 0 17 16"><path d="M12.5 4.5 L5.5 11.5 Q4.3 12.7 3.3 11.7 Q2.3 10.7 3.5 9.5 L10.5 2.5 Q12.8 0.3 14.5 2 Q16.2 3.7 14 6 L6.5 13.5 Q3.5 16.5 1.5 14.5" fill="none" stroke="#444" stroke-width="1.1"/></svg>
<div class="t" style="left:1571px;top:282.15px;font-size:14px;line-height:14px;font-weight:400;color:#3a3a3a;letter-spacing:-0.1px">Anhänge (0)</div>
<div class="t" style="left:1446.6px;top:328.46px;font-size:16px;line-height:16px;font-weight:400;color:#262626;-webkit-text-stroke:0.35px currentColor;letter-spacing:0.3px">Fortschritt</div>
<div class="t" style="left:1446px;top:365.15px;font-size:14px;line-height:14px;font-weight:400;color:#262626;"># Menge verteilen</div>
<div class="r" style="left:1581px;top:363px;width:157px;height:18px;background:#e1e6ee;border-radius:9px"></div>
<div class="r" style="left:1581px;top:363px;width:69px;height:18px;background:#007e85;border-radius:9px"></div>
<div class="t" style="right:24.5px;text-align:right;top:366.00px;font-size:13px;line-height:13px;font-weight:400;color:#262626;">44%</div>
<div class="t" style="left:1446px;top:392.15px;font-size:14px;line-height:14px;font-weight:400;color:#262626;"># Artikel</div>
<div class="r" style="left:1581px;top:390px;width:157px;height:18px;background:#e1e6ee;border-radius:9px"></div>
<div class="r" style="left:1581px;top:390px;width:52px;height:18px;background:#007e85;border-radius:9px"></div>
<div class="t" style="right:24.5px;text-align:right;top:393.00px;font-size:13px;line-height:13px;font-weight:400;color:#262626;">33%</div>
<div class="t" style="left:1446px;top:419.15px;font-size:14px;line-height:14px;font-weight:400;color:#262626;"># Aufträge</div>
<div class="r" style="left:1581px;top:417px;width:157px;height:18px;background:#e1e6ee;border-radius:9px"></div>
<div class="r" style="left:1581px;top:417px;width:52px;height:18px;background:#007e85;border-radius:9px"></div>
<div class="t" style="right:24.5px;text-align:right;top:420.00px;font-size:13px;line-height:13px;font-weight:400;color:#262626;">33%</div>
<div class="t" style="left:1446px;top:446.15px;font-size:14px;line-height:14px;font-weight:400;color:#262626;"># Warenausgänge</div>
<div class="r" style="left:1581px;top:444px;width:157px;height:18px;background:#e1e6ee;border-radius:9px"></div>
<div class="r" style="left:1581px;top:444px;width:52px;height:18px;background:#007e85;border-radius:9px"></div>
<div class="t" style="right:24.5px;text-align:right;top:447.00px;font-size:13px;line-height:13px;font-weight:400;color:#262626;">33%</div>
<div class="t" style="left:1446px;top:473.15px;font-size:14px;line-height:14px;font-weight:400;color:#262626;"># SLT</div>
<div class="r" style="left:1581px;top:471px;width:157px;height:18px;background:#e1e6ee;border-radius:9px"></div>
<div class="t" style="right:24.5px;text-align:right;top:474.00px;font-size:13px;line-height:13px;font-weight:400;color:#262626;">0%</div>
<div class="t" style="left:1446px;top:499.75px;font-size:14px;line-height:14px;font-weight:400;color:#262626;letter-spacing:-0.1px"><b>Status</b>: 3-in Bearbeitung</div>
<div class="r" style="left:1446px;top:534px;width:292px;height:2px;background:#b9c1cb;"></div>
<div class="t" style="left:1446.6px;top:553.46px;font-size:16px;line-height:16px;font-weight:400;color:#2b2b2b;-webkit-text-stroke:0.35px currentColor;">Versanddaten 2337</div>
<div class="t" style="left:1446px;top:582.76px;font-size:18px;line-height:18px;font-weight:700;color:#1f1f1f;letter-spacing:-0.2px">DHL STANDARD</div>
<div class="t" style="left:1446px;top:625.15px;font-size:14px;line-height:14px;font-weight:400;color:#262626;">AMZONIA MUNICH</div>
<div class="t" style="left:1446px;top:644.15px;font-size:14px;line-height:14px;font-weight:400;color:#262626;">Ferdinands Höh 5</div>
<div class="t" style="left:1446px;top:663.15px;font-size:14px;line-height:14px;font-weight:400;color:#262626;">-</div>
<div class="t" style="left:1446px;top:682.15px;font-size:14px;line-height:14px;font-weight:400;color:#262626;"><b>DE</b> 80997 München</div>
<div class="r" style="left:1446px;top:715px;width:292px;height:2px;background:#b9c1cb;"></div>
<div class="t" style="left:1446.6px;top:734.86px;font-size:16px;line-height:16px;font-weight:400;color:#2b2b2b;-webkit-text-stroke:0.35px currentColor;">Positionsdetails</div>
<div class="t" style="left:1446px;top:763.15px;font-size:14px;line-height:14px;font-weight:700;color:#1f1f1f;">90201</div>
<div class="t" style="left:1446px;top:782.45px;font-size:14px;line-height:14px;font-weight:400;color:#262626;letter-spacing:-0.08px">Spielekarton Mensch Ärgere Dich Nicht</div>
<div class="t" style="left:1446px;top:824.76px;font-size:18px;line-height:18px;font-weight:700;color:#1f1f1f;letter-spacing:-0.6px">0 STK</div>
<svg class="r" style="left:1446px;top:868px;" width="292" height="76" viewBox="0 0 292 76">
<defs>
<linearGradient id="cupg" x1="0" x2="1" y1="0" y2="0">
<stop offset="0" stop-color="#1b1c1b"/><stop offset="0.5" stop-color="#222527"/><stop offset="0.8" stop-color="#33373a"/><stop offset="1" stop-color="#3c4144"/>
</linearGradient>
<linearGradient id="olv" x1="0" x2="1" y1="0" y2="1">
<stop offset="0" stop-color="#5d5a4b"/><stop offset="1" stop-color="#514f44"/>
</linearGradient>
<filter id="bl"><feGaussianBlur stdDeviation="0.7"/></filter>
</defs>
<g filter="url(#bl)">
<rect width="292" height="76" fill="#1c1c1a"/>
<path d="M0 0 H60 Q64 4 64 12 V19 H0Z" fill="#5a5c4b"/>
<path d="M0 0 H22 L29 19 H0Z" fill="#1a1a18"/>
<path d="M24 14 Q42 7 60 4" stroke="#151513" stroke-width="3.5" fill="none"/>
<path d="M47 0 L43 17" stroke="#151513" stroke-width="2.5" fill="none"/>
<path d="M0 18.5 H63 L68 76 H0Z" fill="#20211e"/>
<rect x="228" y="0" width="64" height="76" fill="url(#olv)"/>
<path d="M248 30 Q272 28 292 8" stroke="#141413" stroke-width="3" fill="none"/>
<path d="M252 38 Q276 30 292 20" stroke="#141413" stroke-width="3" fill="none"/>
<rect x="246" y="32" width="46" height="14" fill="#23231f"/>
<rect x="246" y="46" width="46" height="30" fill="#7c817d"/>
<path d="M226 12 L290 74 H221Z" fill="#141412"/>
<rect x="221" y="73" width="71" height="3" fill="#b3b6b3"/>
<path d="M64 0 H230 L221 76 H69Z" fill="url(#cupg)"/>
<rect x="64" y="0" width="166" height="2.5" fill="#0e0e0e"/>
<path d="M109 48 L112.5 57 L122 57 L114.5 62.5 L117.5 72 L109 66 L100.5 72 L103.5 62.5 L96 57 L105.5 57Z" fill="#8596a0"/>
<path d="M145 50 L148.5 59 L158 59 L150.5 64.5 L153.5 74 L145 68 L136.5 74 L139.5 64.5 L132 59 L141.5 59Z" fill="#8596a0"/>
<path d="M43.5 57 L50 55 L58 62 L52 66Z" fill="#8a99a2"/>
<path d="M14 76 Q24 70 40 70 L42 76Z" fill="#6a7178"/>
</g>
</svg>
</body></html>
